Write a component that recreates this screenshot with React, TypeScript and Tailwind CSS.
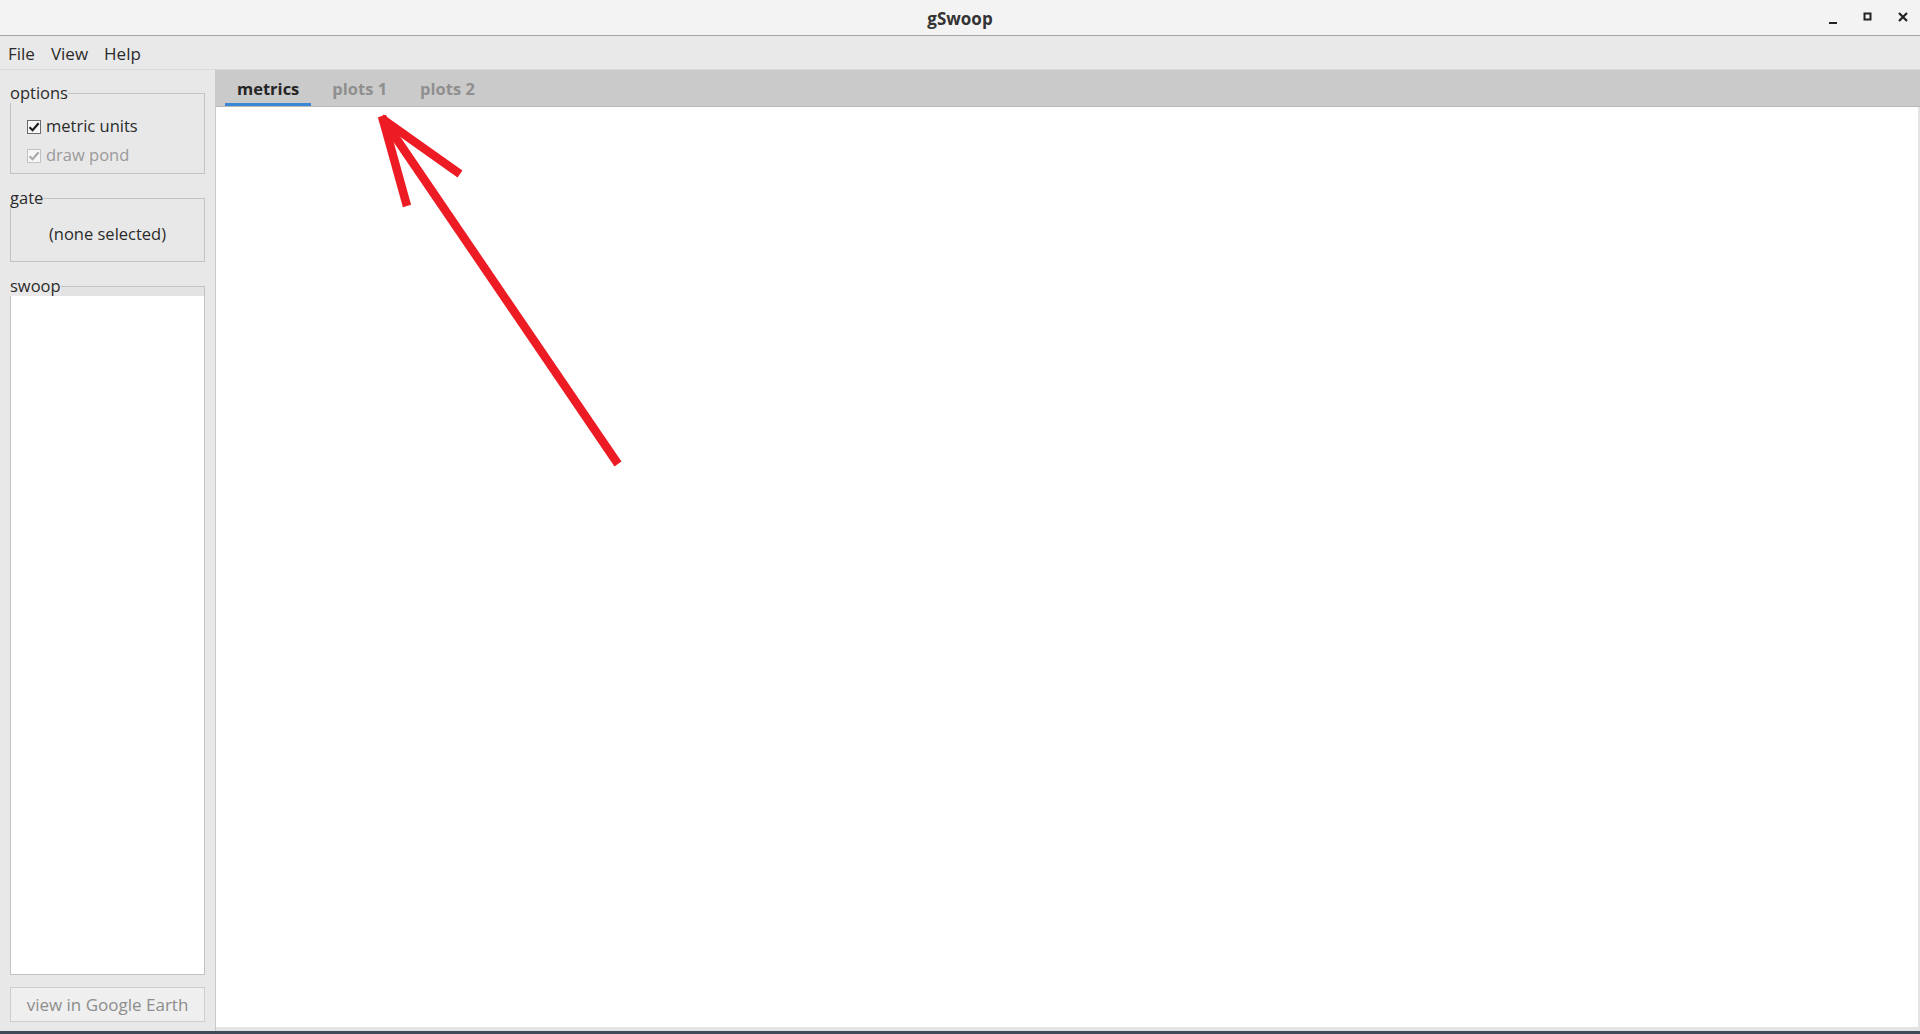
import { FC, ReactNode } from "react";

const font = { fontFamily: '"Open Sans", "Noto Sans", sans-serif' };

const GroupBox: FC<{ label: string; children: ReactNode; bodyClass?: string }> = ({
  label,
  children,
  bodyClass,
}) => {
  return (
    <div className="flex flex-col">
      <div className="flex h-[18px]">
        <span className="text-[16.5px] leading-[18px] text-[#2b2b2b] -mt-[1px]">{label}</span>
        <div className="flex-1 mt-[8px] border-t border-r border-[#c3c3c3]" />
      </div>
      <div className={"border-l border-r border-b border-[#c3c3c3] " + (bodyClass ?? "")}>
        {children}
      </div>
    </div>
  );
};

const CheckRow: FC<{ label: string; disabled?: boolean }> = ({ label, disabled }) => {
  return (
    <div className="flex items-center h-[29px] pl-[16px]">
      <div
        className={
          "w-[14px] h-[14px] border flex items-center justify-center bg-[#f7f7f7] " +
          (disabled ? "border-[#c2c2c2]" : "border-[#6b6b6b]")
        }
      >
        <svg width="12" height="12" viewBox="0 0 12 12">
          <path
            d="M1.5 6.2 L4.6 9.2 L10.6 2.2"
            fill="none"
            stroke={disabled ? "#a9a9a9" : "#1e1e1e"}
            strokeWidth="2.2"
          />
        </svg>
      </div>
      <span
        className={
          "ml-[5px] text-[16.5px] " + (disabled ? "text-[#9a9a9a]" : "text-[#2b2b2b]")
        }
      >
        {label}
      </span>
    </div>
  );
};

const App: FC = () => {
  return (
    <div className="relative w-[1920px] h-[1034px] flex flex-col bg-[#e8e8e8] overflow-hidden" style={font}>
      {/* title bar */}
      <header className="relative h-[36px] bg-[#f3f3f3] border-b border-[#a6a6a6] flex items-center justify-center shrink-0">
        <span className="text-[17px] font-bold text-[#333333] mt-[3px]">gSwoop</span>
        <div className="absolute right-0 top-0 h-full flex items-center">
          <div className="w-[35px] flex justify-center">
            <svg width="10" height="10" viewBox="0 0 10 10" className="mt-[5px]">
              <rect x="1" y="7" width="8" height="2" fill="#222" />
            </svg>
          </div>
          <div className="w-[35px] flex justify-center">
            <svg width="10" height="10" viewBox="0 0 10 10" className="-mt-[2px]">
              <rect x="1.5" y="1.5" width="6" height="6" fill="none" stroke="#222" strokeWidth="2" />
            </svg>
          </div>
          <div className="w-[35px] flex justify-center">
            <svg width="12" height="12" viewBox="0 0 12 12" className="-mt-[2px]">
              <path d="M2 2 L10 10 M10 2 L2 10" stroke="#222" strokeWidth="2.2" />
            </svg>
          </div>
        </div>
      </header>

      {/* menu bar */}
      <nav className="h-[34px] bg-[#e9e9e9] border-b border-[#dadada] flex items-center pl-[8px] pt-[2px] gap-[16px] text-[17px] text-[#2b2b2b] shrink-0">
        <span>File</span>
        <span>View</span>
        <span>Help</span>
      </nav>

      <div className="flex flex-1 min-h-0">
        {/* left panel */}
        <aside className="w-[216px] shrink-0 bg-[#e8e8e8] border-r border-[#c9c9c9] px-[10px] pt-[15px] pb-[9px] flex flex-col">
          <GroupBox label="options" bodyClass="pt-[9px] pb-[3px]">
            <CheckRow label="metric units" />
            <CheckRow label="draw pond" disabled />
          </GroupBox>

          <div className="mt-[16px]">
            <GroupBox label="gate" bodyClass="h-[54px] flex items-center justify-center">
              <span className="text-[16.5px] text-[#2b2b2b]">(none selected)</span>
            </GroupBox>
          </div>

          <div className="mt-[16px] flex-1 flex flex-col min-h-0">
            <div className="flex h-[18px]">
              <span className="text-[16.5px] leading-[18px] text-[#2b2b2b] -mt-[1px]">swoop</span>
              <div className="flex-1 mt-[8px] border-t border-r border-[#c3c3c3] bg-[#e3e3e3]" />
            </div>
            <div className="flex-1 bg-white border-l border-r border-b border-[#c3c3c3]" />
          </div>

          <button className="mt-[12px] h-[35px] w-full bg-[#efefef] border border-[#cdcdcd] text-[17px] text-[#8d8d8d]">
            view in Google Earth
          </button>
        </aside>

        {/* main tab area */}
        <main className="flex-1 flex flex-col min-w-0">
          <div className="h-[37px] bg-[#cacaca] border-b border-[#b8b8b8] flex items-end pl-[9px] gap-[9px] shrink-0">
            <div className="h-full px-[12px] flex items-center border-b-[3px] border-[#3a87d6]">
              <span className="text-[16.5px] font-bold text-[#262626] mt-[5px]">metrics</span>
            </div>
            <div className="h-full px-[12px] flex items-center border-b-[3px] border-transparent">
              <span className="text-[16.5px] font-bold text-[#8f8f8f] mt-[5px]">plots 1</span>
            </div>
            <div className="h-full px-[12px] flex items-center border-b-[3px] border-transparent">
              <span className="text-[16.5px] font-bold text-[#8f8f8f] mt-[5px]">plots 2</span>
            </div>
          </div>
          <div className="flex-1 bg-white border-r-2 border-b-[4px] border-[#e4e4e4]" />
        </main>
      </div>

      {/* taskbar edge */}
      <div className="h-[3px] bg-[#3d4c58] shrink-0" />

      {/* annotation arrow */}
      <svg
        className="absolute left-0 top-0 pointer-events-none"
        width="1920"
        height="1034"
        viewBox="0 0 1920 1034"
      >
        <g stroke="#ed1c24" strokeWidth="8.5" fill="none" strokeLinecap="butt">
          <line x1="618" y1="464" x2="383" y2="119" />
          <line x1="382" y1="116" x2="407" y2="206" />
          <line x1="381" y1="118" x2="460" y2="174" />
        </g>
      </svg>
    </div>
  );
};

export default App;
